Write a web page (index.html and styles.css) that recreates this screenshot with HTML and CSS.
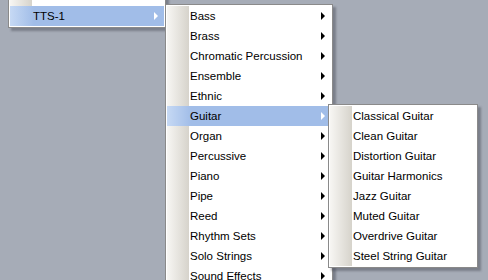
FILE: index.html
```html
<!DOCTYPE html>
<html lang="ja">
<head>
    <meta charset="UTF-8">
    <title>TTS-1 メニュー</title>
    <link rel="stylesheet" href="styles.css">
</head>
<body>
    <!-- 親メニュー（上部は画面外） -->
    <ul class="menu menu-root">
        <li class="item"><span class="label">&nbsp;</span></li>
        <li class="item active sub"><span class="label">TTS-1</span></li>
    </ul>

    <!-- 楽器カテゴリ -->
    <ul class="menu menu-cat">
        <li class="item sub"><span class="label">Bass</span></li>
        <li class="item sub"><span class="label">Brass</span></li>
        <li class="item sub"><span class="label">Chromatic Percussion</span></li>
        <li class="item sub"><span class="label">Ensemble</span></li>
        <li class="item sub"><span class="label">Ethnic</span></li>
        <li class="item active sub"><span class="label">Guitar</span></li>
        <li class="item sub"><span class="label">Organ</span></li>
        <li class="item sub"><span class="label">Percussive</span></li>
        <li class="item sub"><span class="label">Piano</span></li>
        <li class="item sub"><span class="label">Pipe</span></li>
        <li class="item sub"><span class="label">Reed</span></li>
        <li class="item sub"><span class="label">Rhythm Sets</span></li>
        <li class="item sub"><span class="label">Solo Strings</span></li>
        <li class="item sub"><span class="label">Sound Effects</span></li>
    </ul>

    <!-- ギター -->
    <ul class="menu menu-guitar">
        <li class="item"><span class="label">Classical Guitar</span></li>
        <li class="item"><span class="label">Clean Guitar</span></li>
        <li class="item"><span class="label">Distortion Guitar</span></li>
        <li class="item"><span class="label">Guitar Harmonics</span></li>
        <li class="item"><span class="label">Jazz Guitar</span></li>
        <li class="item"><span class="label">Muted Guitar</span></li>
        <li class="item"><span class="label">Overdrive Guitar</span></li>
        <li class="item"><span class="label">Steel String Guitar</span></li>
    </ul>
</body>
</html>
```

FILE: styles.css
```css
body {
    margin: 0;
    width: 488px;
    height: 280px;
    overflow: hidden;
    position: relative;
    background-color: #a6acb7;
    font-family: "Liberation Sans", Arial, sans-serif;
    font-size: 11.5px;
    color: #000;
}

.menu {
    position: absolute;
    margin: 0;
    padding: 1px;
    list-style: none;
    background-color: #fff;
    border: 1px solid #8a8a8a;
    box-shadow: 3px 3px 2px rgba(70, 74, 84, 0.45);
}

.menu-root {
    left: 8px;
    top: -16px;
    width: 154px;
}

.menu-cat {
    left: 165px;
    top: 4px;
    width: 164px;
}

.menu-guitar {
    left: 328px;
    top: 104px;
    width: 146px;
}

.item {
    display: flex;
    align-items: center;
    height: 20px;
    position: relative;
    background: linear-gradient(to right, #f7f6f3 0, #d6d3cb 22px, #fff 22px);
}

.label {
    padding-left: 23px;
    white-space: nowrap;
    line-height: 20px;
}

.item.active {
    background: linear-gradient(to right, #c6d9f4 0, #a1bde8 24px);
}

/* サブメニュー矢印 */
.sub::after {
    content: "";
    position: absolute;
    right: 6px;
    top: 6px;
    border-top: 4px solid transparent;
    border-bottom: 4px solid transparent;
    border-left: 4px solid #000;
}

.sub.active::after {
    border-left-color: #fff;
}
```
